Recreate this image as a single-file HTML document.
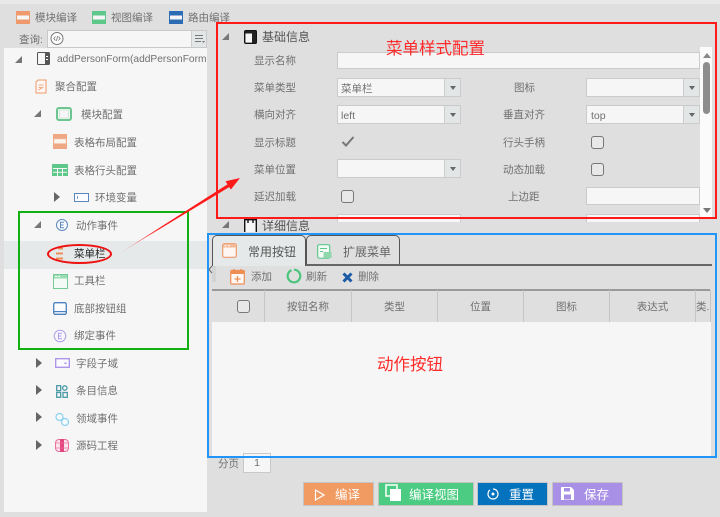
<!DOCTYPE html>
<html><head><meta charset="utf-8">
<style>
html,body{margin:0;padding:0;}
body{width:720px;height:517px;overflow:hidden;position:relative;background:#dfdfdf;font-family:"Liberation Sans","Noto Sans CJK SC",sans-serif;font-size:10.5px;color:#707070;filter:blur(.3px);}
div,span,svg{position:absolute;box-sizing:border-box;}
.t{white-space:nowrap;line-height:14px;}
.tri{width:0;height:0;border-left:6px solid #666;border-top:5px solid transparent;border-bottom:5px solid transparent;}
.open{width:0;height:0;border-right:7px solid #777;border-top:7px solid transparent;}
.inp{background:#f6f6f6;border:1px solid #cbcbcb;height:18px;line-height:18px;padding-left:3px;}
.sel{height:19px;line-height:20px;}
.sel:after{content:"";position:absolute;right:0;top:0;bottom:0;width:15px;background:#e3e6e6;border-left:1px solid #ccc;}
.sel:before{content:"";position:absolute;z-index:2;right:4px;top:7px;border-top:4px solid #666;border-left:3.5px solid transparent;border-right:3.5px solid transparent;}
.cb{width:13px;height:13px;border:1.5px solid #777;border-radius:3px;background:#e8e8e8;}
.btn{height:24px;top:482px;color:#fff;font-size:12.5px;line-height:24px;border:1px solid #c4c4c4;}
.th{top:290px;height:32px;line-height:34px;text-align:center;border-right:1px solid #c5c5c5;white-space:nowrap;}
</style></head><body>

<div style="left:0;top:0;width:720px;height:4px;background:#e9e9e9"></div>

<!-- top toolbar -->
<svg style="left:16px;top:11px" width="14" height="13"><rect x=".5" y=".5" width="13" height="12" fill="#f6f6f6" stroke="#ee9a6c"/><rect x="0" y="0" width="14" height="4.500" fill="#ee9a6c"/><rect x="0" y="8.500" width="14" height="4.500" fill="#ee9a6c"/></svg>
<span class="t" style="left:35px;top:11px">模块编译</span>
<svg style="left:92px;top:11px" width="14" height="13"><rect x=".5" y=".5" width="13" height="12" fill="#f6f6f6" stroke="#5ec88a"/><rect x="0" y="0" width="14" height="4.500" fill="#5ec88a"/><rect x="0" y="8.500" width="14" height="4.500" fill="#5ec88a"/></svg>
<span class="t" style="left:111px;top:11px">视图编译</span>
<svg style="left:169px;top:11px" width="14" height="13"><rect x=".5" y=".5" width="13" height="12" fill="#f6f6f6" stroke="#2b6cb4"/><rect x="0" y="0" width="14" height="4.500" fill="#2b6cb4"/><rect x="0" y="8.500" width="14" height="4.500" fill="#2b6cb4"/></svg>
<span class="t" style="left:188px;top:11px">路由编译</span>

<!-- search -->
<span class="t" style="left:19px;top:33px">查询:</span>
<div style="left:47px;top:30px;width:160px;height:18px;background:#f6f6f6;border:1px solid #c9c9c9"></div>
<svg style="left:49px;top:31px" width="16" height="15"><circle cx="8" cy="7.500" r="6" fill="#fff" stroke="#777"/><path d="M6.500 5.500 4.800 7.500l1.700 2M9.500 5.500l1.700 2-1.700 2M8.600 5 7.400 10" fill="none" stroke="#777" stroke-width=".8"/></svg>
<div style="left:191px;top:31px;width:15px;height:16px;background:#e3e6e6;border-left:1px solid #ccc"></div>
<svg style="left:195px;top:34px" width="11" height="10"><path d="M0 1.500h8M0 4.500h8M0 7.500h6" stroke="#777" stroke-width="1"/><path d="M7 7h3l-1.500 2z" fill="#777"/></svg>

<!-- left tree panel -->
<div style="left:4px;top:48px;width:203px;height:464px;background:#f6f6f6"></div>
<div style="left:4px;top:241px;width:203px;height:28px;background:#e5e9e9"></div>

<div class="open" style="left:15px;top:56px"></div>
<svg style="left:37px;top:52px" width="13" height="13"><rect x=".5" y=".5" width="12" height="12" rx="1" fill="#f6f6f6" stroke="#555"/><rect x="8" y="1" width="4" height="11" fill="#555"/><rect x="9" y="4" width="2" height="1" fill="#fff"/><rect x="9" y="7" width="2" height="1" fill="#fff"/></svg>
<span class="t" style="left:57px;top:53px;width:150px;overflow:hidden;font-size:10.2px;">addPersonForm(addPersonFormI</span>

<svg style="left:35px;top:79px" width="12" height="15"><path d="M1 3 3 1h8v13H1z" fill="#fdf6f2" stroke="#ee9a6c"/><path d="M3.500 6h5M3.500 8.500h3M3.500 11l5-3" stroke="#ee9a6c" stroke-width=".8" fill="none"/></svg>
<span class="t" style="left:55px;top:80px">聚合配置</span>

<div class="open" style="left:34px;top:110px"></div>
<svg style="left:56px;top:107px" width="16" height="14"><rect x="1" y="1" width="14" height="12" rx="2" fill="none" stroke="#6cc48e" stroke-width="2"/><rect x="3.500" y="3" width="9" height="8" fill="#f6f6f6" stroke="#b7e0c5" stroke-width=".6"/></svg>
<span class="t" style="left:81px;top:108px">模块配置</span>

<svg style="left:52px;top:134px" width="16" height="15"><rect x="1" y="0" width="14" height="15" fill="#eea883"/><rect x="2" y="5" width="12" height="4.500" fill="#fbf3ee" stroke="#f3c6ad" stroke-width=".5"/></svg>
<span class="t" style="left:74px;top:136px">表格布局配置</span>

<svg style="left:52px;top:164px" width="16" height="12"><rect x="0" y="0" width="16" height="12" fill="#5ec88a"/><path d="M1 4.500h14M1 8.300h14M5.500 4v8M10.500 4v8" stroke="#f6f6f6" stroke-width="1"/></svg>
<span class="t" style="left:74px;top:164px">表格行头配置</span>

<div class="tri" style="left:54px;top:192px"></div>
<svg style="left:74px;top:193px" width="15" height="9"><rect x=".5" y=".5" width="14" height="8" fill="#fafcff" stroke="#5a86bd"/><rect x="3" y="3" width=".8" height="3" fill="#5a86bd"/></svg>
<span class="t" style="left:95px;top:191px">环境变量</span>

<div class="open" style="left:34px;top:221px"></div>
<svg style="left:55px;top:218px" width="14" height="14"><circle cx="7" cy="7" r="5.500" fill="#f8fbff" stroke="#5a86bd" stroke-width="1"/><path d="M9 4.200H5.500v5.600H9M5.500 7h3" fill="none" stroke="#5a86bd" stroke-width="1"/></svg>
<span class="t" style="left:76px;top:219px">动作事件</span>

<svg style="left:55px;top:245px" width="10" height="18"><path d="M3 3.500h5M1 8.500h7M1 13.500h7" stroke="#ee8e55" stroke-width="2"/></svg>
<span class="t" style="left:74px;top:247px;color:#222">菜单栏</span>

<svg style="left:53px;top:274px" width="15" height="15"><rect x=".5" y=".5" width="14" height="14" fill="#f4fbf6" stroke="#74cb96"/><rect x="1" y="1" width="13" height="3.500" fill="#9adcb4"/><rect x="2" y="2" width="2" height="1" fill="#fff"/><rect x="5" y="2" width="2" height="1" fill="#fff"/></svg>
<span class="t" style="left:74px;top:274px">工具栏</span>

<svg style="left:53px;top:302px" width="14" height="13"><rect x=".7" y=".7" width="12.600" height="11.600" rx="1.500" fill="#fafcff" stroke="#4c80bf" stroke-width="1.300"/><rect x="1" y="9" width="12" height="1.200" fill="#4c80bf"/></svg>
<span class="t" style="left:74px;top:302px">底部按钮组</span>

<svg style="left:53px;top:329px" width="14" height="14"><circle cx="7" cy="7" r="5.800" fill="#f8f6fe" stroke="#b19ce8" stroke-width="1"/><path d="M9 4.200H5.500v5.600H9M5.500 7h3" fill="none" stroke="#b19ce8" stroke-width="1"/></svg>
<span class="t" style="left:74px;top:329px">绑定事件</span>

<div class="tri" style="left:36px;top:358px"></div>
<svg style="left:55px;top:358px" width="15" height="10"><rect x=".7" y=".7" width="13.600" height="8.600" fill="#fbfaff" stroke="#a98fe6" stroke-width="1.300"/><rect x="9.500" y="4.500" width="2" height="1.500" fill="#a98fe6"/></svg>
<span class="t" style="left:76px;top:357px">字段子域</span>

<div class="tri" style="left:36px;top:385px"></div>
<svg style="left:56px;top:385px" width="12" height="13"><g fill="none" stroke="#4a9aa8" stroke-width="1.300"><rect x=".7" y=".7" width="4" height="5"/><circle cx="8.800" cy="3" r="2.200"/><rect x=".7" y="7.500" width="4" height="4.800"/><rect x="7" y="7.500" width="4.300" height="4.800"/></g></svg>
<span class="t" style="left:76px;top:384px">条目信息</span>

<div class="tri" style="left:36px;top:412px"></div>
<svg style="left:55px;top:412px" width="15" height="15"><g fill="#f4fbff" stroke="#8fd0ef" stroke-width="1.200"><circle cx="4.500" cy="5" r="3.500"/><circle cx="10" cy="10" r="3.500"/></g><path d="M6 8 8 7" stroke="#8fd0ef"/></svg>
<span class="t" style="left:76px;top:412px">领域事件</span>

<div class="tri" style="left:36px;top:440px"></div>
<svg style="left:55px;top:438px" width="14" height="15"><path d="M4 1.500h6c2 0 3.500 1.500 3.500 3.500v5c0 2-1.500 3.500-3.500 3.500H4C2 13.500.5 12 .5 10V5C.5 3 2 1.500 4 1.500z" fill="#fbe6ee" stroke="#ea6f9c"/><rect x="5" y="1" width="4" height="13" fill="#e5457f"/><path d="M1 5h12M1 10h12" stroke="#ea6f9c" stroke-width=".7"/></svg>
<span class="t" style="left:76px;top:439px">源码工程</span>

<!-- upper right form -->
<div class="open" style="left:222px;top:33px"></div>
<svg style="left:244px;top:30px" width="13" height="14"><rect x=".7" y=".7" width="11.600" height="12.600" rx="1" fill="#f6f6f6" stroke="#111" stroke-width="1.400"/><rect x="8" y="1" width="4" height="12" fill="#222"/><rect x="1" y="1" width="11" height="2.500" fill="#222"/></svg>
<span class="t" style="left:262px;top:30px;font-size:12px;color:#555">基础信息</span>

<span class="t" style="left:254px;top:54px">显示名称</span>
<div class="inp" style="left:337px;top:52px;width:363px;height:17px"></div>

<span class="t" style="left:254px;top:81px">菜单类型</span>
<div class="inp sel" style="left:337px;top:78px;width:124px">菜单栏</div>
<span class="t" style="left:514px;top:81px">图标</span>
<div class="inp sel" style="left:586px;top:78px;width:114px"></div>

<span class="t" style="left:254px;top:108px">横向对齐</span>
<div class="inp sel" style="left:337px;top:105px;width:124px">left</div>
<span class="t" style="left:503px;top:108px">垂直对齐</span>
<div class="inp sel" style="left:586px;top:105px;width:114px;padding-left:4px">top</div>

<span class="t" style="left:254px;top:136px">显示标题</span>
<svg style="left:341px;top:135px" width="14" height="13"><path d="M1.500 7 5 10.500 12.500 2" fill="none" stroke="#777" stroke-width="2"/></svg>
<span class="t" style="left:503px;top:136px">行头手柄</span>
<div class="cb" style="left:591px;top:136px"></div>

<span class="t" style="left:254px;top:163px">菜单位置</span>
<div class="inp sel" style="left:337px;top:159px;width:124px"></div>
<span class="t" style="left:503px;top:163px">动态加载</span>
<div class="cb" style="left:591px;top:163px"></div>

<span class="t" style="left:254px;top:190px">延迟加载</span>
<div class="cb" style="left:341px;top:190px"></div>
<span class="t" style="left:508px;top:190px">上边距</span>
<div class="inp" style="left:586px;top:187px;width:114px"></div>

<div class="inp" style="left:337px;top:214px;width:124px;height:8px;border-bottom:0"></div>
<div class="inp" style="left:586px;top:214px;width:114px;height:8px;border-bottom:0"></div>

<!-- scrollbar -->
<div style="left:700px;top:47px;width:12px;height:170px;background:#fbfbfb"></div>
<div style="left:703px;top:62px;width:7px;height:52px;background:#8d8d8d;border-radius:4px"></div>
<div style="left:703px;top:53px;border-bottom:5px solid #888;border-left:4px solid transparent;border-right:4px solid transparent"></div>
<div style="left:703px;top:208px;border-top:5px solid #777;border-left:4px solid transparent;border-right:4px solid transparent"></div>

<!-- 详细信息 -->
<div class="open" style="left:222px;top:221px"></div>
<svg style="left:244px;top:218px" width="13" height="14"><path d="M.7 14V1.700h11.600V14M4 1V5M9 1V5" fill="#f6f6f6" stroke="#111" stroke-width="1.400"/></svg>
<span class="t" style="left:262px;top:219px;font-size:12px;color:#555">详细信息</span>

<!-- lower panel: tabs -->
<div style="left:212px;top:264px;width:500px;height:1.500px;background:#666"></div>
<div style="left:212px;top:235px;width:94px;height:31px;background:#e5e9e9;border:1px solid #555;border-bottom:0;border-radius:5px 5px 0 0"></div>
<div style="left:306px;top:235px;width:94px;height:29px;background:#dfdfdf;border:1px solid #555;border-bottom:0;border-radius:5px 5px 0 0"></div>
<svg style="left:222px;top:243px" width="15" height="15"><rect x=".7" y=".7" width="13.600" height="13.600" rx="1.500" fill="#fdf6f2" stroke="#ee9a6c" stroke-width="1.200"/><rect x="1" y="1" width="13" height="3.500" fill="#f3b997"/><rect x="2.500" y="2.200" width="2" height="1" fill="#fff"/><rect x="6" y="2.200" width="2" height="1" fill="#fff"/></svg>
<span class="t" style="left:248px;top:245px;font-size:12px;color:#555">常用按钮</span>
<svg style="left:317px;top:244px" width="15" height="15"><rect x=".7" y=".7" width="12" height="13.500" rx="1.500" fill="#f4fbf6" stroke="#5ec88a" stroke-width="1.200"/><path d="M3 4.500h7M3 7.500h3" stroke="#5ec88a"/><rect x="6.500" y="8" width="8" height="6" fill="#8fd8ad"/></svg>
<span class="t" style="left:343px;top:245px;font-size:12px;color:#666">扩展菜单</span>

<!-- splitter -->
<div style="left:212px;top:266px;width:4px;height:16px;background-image:radial-gradient(#aab4bd 40%,transparent 45%);background-size:2px 2px"></div>
<svg style="left:208px;top:265px" width="5" height="9"><path d="M4 1 1 4.500 4 8" fill="none" stroke="#666"/></svg>

<!-- toolbar -->
<svg style="left:230px;top:268px" width="15" height="17"><rect x=".7" y="2.500" width="13.600" height="13.500" rx="1" fill="#fdf6f2" stroke="#ee8e55" stroke-width="1.200"/><rect x="1" y="3" width="13" height="3" fill="#ee8e55"/><path d="M4 1v3M11 1v3" stroke="#ee8e55" stroke-width="1.500"/><path d="M7.500 8v6M4.500 11h6" stroke="#ee8e55" stroke-width="1.200"/></svg>
<span class="t" style="left:251px;top:270px">添加</span>
<svg style="left:286px;top:268px" width="16" height="16"><path d="M5.500 2.200A6.300 6.300 0 1 0 8 1.700" fill="none" stroke="#4cc47e" stroke-width="2.200"/></svg>
<span class="t" style="left:306px;top:270px">刷新</span>
<svg style="left:342px;top:272px" width="11" height="11"><path d="M1.500 1.500 9.500 9.500M9.500 1.500 1.500 9.500" stroke="#1d5ba8" stroke-width="3"/></svg>
<span class="t" style="left:358px;top:270px">删除</span>

<!-- table -->
<div style="left:212px;top:289px;width:498px;height:1.500px;background:#999"></div>
<div class="th" style="left:212px;width:53px"></div>
<div class="cb" style="left:237px;top:300px"></div>
<div class="th" style="left:265px;width:87px">按钮名称</div>
<div class="th" style="left:352px;width:86px">类型</div>
<div class="th" style="left:438px;width:86px">位置</div>
<div class="th" style="left:524px;width:86px">图标</div>
<div class="th" style="left:610px;width:86px">表达式</div>
<div class="th" style="left:696px;width:15px;overflow:hidden;text-align:left;">类.</div>
<div style="left:212px;top:322px;width:499px;height:134px;background:#f6f6f6"></div>

<!-- pager -->
<span class="t" style="left:218px;top:457px">分页</span>
<div style="left:243px;top:453px;width:28px;height:20px;background:#f6f6f6;border:1px solid #c9c9c9;text-align:center;line-height:18px">1</div>

<!-- buttons -->
<div class="btn" style="left:303px;width:71px;background:#f19a61;padding-left:31px">编译</div>
<svg style="left:314px;top:489px" width="12" height="12"><path d="M1.500 1 10 6 1.500 11z" fill="none" stroke="#fff" stroke-width="1.200"/></svg>
<div class="btn" style="left:378px;width:96px;background:#4bcc82;padding-left:30px">编译视图</div>
<svg style="left:385px;top:484px" width="17" height="18"><rect x="1" y="1" width="11" height="11" fill="none" stroke="#fff" stroke-width="1.500"/><rect x="5" y="5" width="11" height="12" fill="#fff"/></svg>
<div class="btn" style="left:477px;width:71px;background:#0472bd;padding-left:31px">重置</div>
<svg style="left:487px;top:488px" width="12" height="12"><path d="M3 2A5 5 0 1 0 6 1" fill="none" stroke="#fff" stroke-width="1.200"/><circle cx="6" cy="6" r="1.500" fill="#fff"/></svg>
<div class="btn" style="left:552px;width:71px;background:#a790e6;padding-left:31px">保存</div>
<svg style="left:561px;top:487px" width="13" height="13"><path d="M0 0h10l3 3v10H0z" fill="#fff"/><rect x="3" y="1" width="6" height="3.500" fill="#a790e6"/><rect x="3" y="7.500" width="7" height="5" fill="#a790e6"/></svg>

<!-- annotations -->
<div style="left:216px;top:22px;width:501px;height:197px;border:2px solid #ff1a1a"></div>
<span class="t" style="left:386px;top:39px;font-size:16.500px;line-height:20px;color:#ff2a2a">菜单样式配置</span>
<div style="left:207px;top:233px;width:510px;height:225px;border:2.500px solid #2196f8"></div>
<span class="t" style="left:377px;top:355px;font-size:16.500px;line-height:20px;color:#ff2a2a">动作按钮</span>
<div style="left:18px;top:211px;width:171px;height:139px;border:2px solid #12b012"></div>
<div style="left:47px;top:244px;width:65px;height:20px;border:2px solid #ee1111;border-radius:50%"></div>
<svg style="left:115px;top:170px" width="135" height="90"><defs><linearGradient id="g" x1="0" y1="1" x2="1" y2="0"><stop offset="0" stop-color="#ff1a1a" stop-opacity=".15"/><stop offset=".35" stop-color="#ff1a1a"/></linearGradient></defs><path d="M5 83 114.200 13.200 116 16Z" fill="url(#g)"/><path d="M125 8 110.500 11.200 115.800 19.600Z" fill="#ff1a1a"/></svg>

</body></html>
